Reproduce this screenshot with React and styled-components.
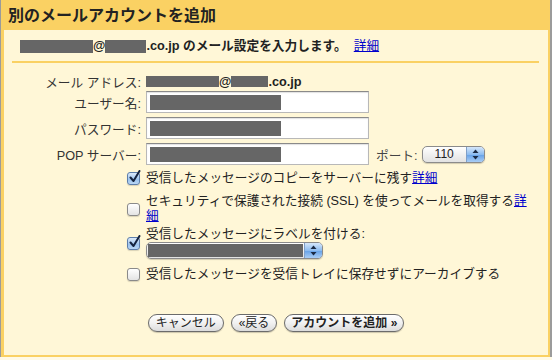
import React from 'react';
import styled, { createGlobalStyle, css } from 'styled-components';

const Global = createGlobalStyle`
  html, body { margin: 0; padding: 0; background: #fffae6; }
  body {
    font-family: "Liberation Sans", "Noto Sans CJK JP", sans-serif;
    color: #222;
  }
`;

const Frame = styled.div`
  width: 552px;
  height: 357px;
  box-sizing: border-box;
  border-left: 1px solid #9b9b9b;
  border-right: 2px solid #9b9b9b;
  background: #fad163;
  padding: 0 2px 2px 3px;
  display: flex;
  flex-direction: column;
`;

const Header = styled.div`
  height: 30px;
  display: flex;
  align-items: center;
  padding: 0 0 2px 4px;
  box-sizing: border-box;
  font-size: 16px;
  font-weight: bold;
  color: #222;
  white-space: nowrap;
`;

const Panel = styled.div`
  flex: 1;
  background: #fff7d7;
  display: flex;
  flex-direction: column;
`;

const TopLine = styled.div`
  padding: 8px 0 0 16px;
  font-size: 12.7px;
  font-weight: bold;
  line-height: 16px;
  display: flex;
  align-items: center;
  white-space: pre;
`;

const Redacted = styled.span`
  display: inline-block;
  width: ${p => p.$w}px;
  height: ${p => p.$h || 12}px;
  background: #666;
  flex: none;
`;

const Link = styled.a`
  color: #0000cc;
  text-decoration: underline;
  font-weight: normal;
  cursor: pointer;
`;

const Separator = styled.div`
  margin: 7px 9px 0 8px;
  height: 2px;
  background: #fad163;
`;

const Row = styled.div`
  display: grid;
  grid-template-columns: 137px auto;
  column-gap: 5px;
  align-items: center;
  height: ${p => p.$h}px;
  margin-top: ${p => p.$mt}px;
`;

const Label = styled.div`
  text-align: right;
  font-size: 12.7px;
  color: #333;
  white-space: nowrap;
`;

const Value = styled.div`
  display: flex;
  align-items: center;
  font-size: 12.7px;
  font-weight: bold;
  white-space: pre;
`;

const Field = styled.div`
  display: flex;
  align-items: center;
`;

const InputBox = styled.div`
  width: 223px;
  height: 22px;
  box-sizing: border-box;
  border: 1px solid #b8b8b8;
  border-top-color: #8a8a8a;
  background: #fff;
  box-shadow: inset 0 1px 1px rgba(0, 0, 0, 0.12);
  padding: 0 3px;
  display: flex;
  align-items: center;
`;

const PortLabel = styled.span`
  margin-left: 7px;
  font-size: 12.7px;
  color: #444;
`;

const SelectBox = styled.div`
  width: ${p => p.$w}px;
  height: 17px;
  box-sizing: border-box;
  margin-left: ${p => p.$ml || 0}px;
  border: 1px solid #8b8b8b;
  border-radius: 5px;
  background: linear-gradient(#ffffff, #f0f0f0 50%, #e2e2e2);
  box-shadow: 0 1px 1px rgba(0, 0, 0, 0.18);
  display: flex;
  overflow: hidden;
`;

const SelectText = styled.div`
  flex: 1;
  display: flex;
  align-items: center;
  padding-left: ${p => p.$pl}px;
  font-size: 12px;
  color: #222;
`;

const SelectArrow = styled.div`
  width: 17px;
  border-left: 1px solid #7f9fc8;
  background: linear-gradient(#d6e7fa, #8dbcf0 50%, #6aa4e8 55%, #a9cdf5);
  display: flex;
  align-items: center;
  justify-content: center;
`;

const Arrows = () => (
  <svg width="7" height="11" viewBox="0 0 7 11">
    <path d="M3.5 0.5 L6.5 4 L0.5 4 Z" fill="#1b2a44" />
    <path d="M3.5 10.5 L6.5 7 L0.5 7 Z" fill="#1b2a44" />
  </svg>
);

const Select = ({ w, ml, pl, children }) => (
  <SelectBox $w={w} $ml={ml}>
    <SelectText $pl={pl}>{children}</SelectText>
    <SelectArrow><Arrows /></SelectArrow>
  </SelectBox>
);

const CheckRow = styled.div`
  display: flex;
  align-items: center;
  gap: 6px;
  padding-left: 123px;
  margin-top: ${p => p.$mt}px;
`;

const Box = styled.span`
  position: relative;
  flex: none;
  width: 13px;
  height: 13px;
  box-sizing: border-box;
  border-radius: 3px;
  border: 1px solid #8a8a8a;
  background: linear-gradient(#ffffff, #e4e4e4);
  box-shadow: 0 1px 1px rgba(0, 0, 0, 0.15);
  ${p => p.$checked && css`
    border-color: #5d7eab;
    background: linear-gradient(#dceafa, #9dc4ee 60%, #b9d6f5);
  `}
`;

const Tick = styled.svg`
  position: absolute;
  left: 1px;
  top: -3px;
`;

const Checkbox = ({ checked }) => (
  <Box $checked={checked}>
    {checked && (
      <Tick width="12" height="13" viewBox="0 0 12 13">
        <path d="M1.5 7.5 L4.5 11 L10.5 1" fill="none" stroke="#15233f" strokeWidth="2" strokeLinecap="round" strokeLinejoin="round" />
      </Tick>
    )}
  </Box>
);

const CheckText = styled.div`
  width: 388px;
  font-size: 12.7px;
  line-height: 15px;
  color: #222;
`;

const Buttons = styled.div`
  margin-top: auto;
  margin-bottom: 23px;
  display: flex;
  justify-content: center;
  gap: 7px;
`;

const Button = styled.button`
  height: 18px;
  box-sizing: border-box;
  border: 1px solid #6b6b6b;
  border-radius: 9px;
  background: linear-gradient(#ffffff, #f1f1f1 50%, #dcdcdc);
  box-shadow: 0 1px 1px rgba(0, 0, 0, 0.2);
  padding: 0 ${p => (p.$primary ? 6 : 7)}px;
  font-family: inherit;
  font-size: 12px;
  line-height: 16px;
  font-weight: ${p => (p.$primary ? 'bold' : 'normal')};
  color: #222;
  white-space: pre;
`;

export default function App() {
  return (
    <>
      <Global />
      <Frame>
        <Header>別のメールアカウントを追加</Header>
        <Panel>
          <TopLine>
            <Redacted $w={73} $h={13} />@<Redacted $w={41} $h={13} />.co.jp のメール設定を入力します。  <Link>詳細</Link>
          </TopLine>
          <Separator />

          <Row $h={18} $mt={9}>
            <Label>メール アドレス:</Label>
            <Value>
              <Redacted $w={73} $h={11} />@<Redacted $w={37} $h={11} />.co.jp
            </Value>
          </Row>
          <Row $h={22} $mt={1}>
            <Label>ユーザー名:</Label>
            <Field>
              <InputBox><Redacted $w={131} $h={15} /></InputBox>
            </Field>
          </Row>
          <Row $h={22} $mt={4}>
            <Label>パスワード:</Label>
            <Field>
              <InputBox><Redacted $w={131} $h={15} /></InputBox>
            </Field>
          </Row>
          <Row $h={22} $mt={4}>
            <Label>POP サーバー:</Label>
            <Field>
              <InputBox><Redacted $w={131} $h={15} /></InputBox>
              <PortLabel>ポート:</PortLabel>
              <Select w={63} ml={4} pl={12}>110</Select>
            </Field>
          </Row>

          <CheckRow $mt={6}>
            <Checkbox checked />
            <CheckText>受信したメッセージのコピーをサーバーに残す<Link>詳細</Link></CheckText>
          </CheckRow>
          <CheckRow $mt={8}>
            <Checkbox />
            <CheckText>セキュリティで保護された接続 (SSL) を使ってメールを取得する<Link>詳細</Link></CheckText>
          </CheckRow>
          <CheckRow $mt={3}>
            <Checkbox checked />
            <CheckText>
              受信したメッセージにラベルを付ける:
              <Select w={177} pl={1}><Redacted $w={155} $h={13} /></Select>
            </CheckText>
          </CheckRow>
          <CheckRow $mt={8}>
            <Checkbox />
            <CheckText>受信したメッセージを受信トレイに保存せずにアーカイブする</CheckText>
          </CheckRow>

          <Buttons>
            <Button>キャンセル</Button>
            <Button>«戻る</Button>
            <Button $primary>アカウントを追加 »</Button>
          </Buttons>
        </Panel>
      </Frame>
    </>
  );
}
